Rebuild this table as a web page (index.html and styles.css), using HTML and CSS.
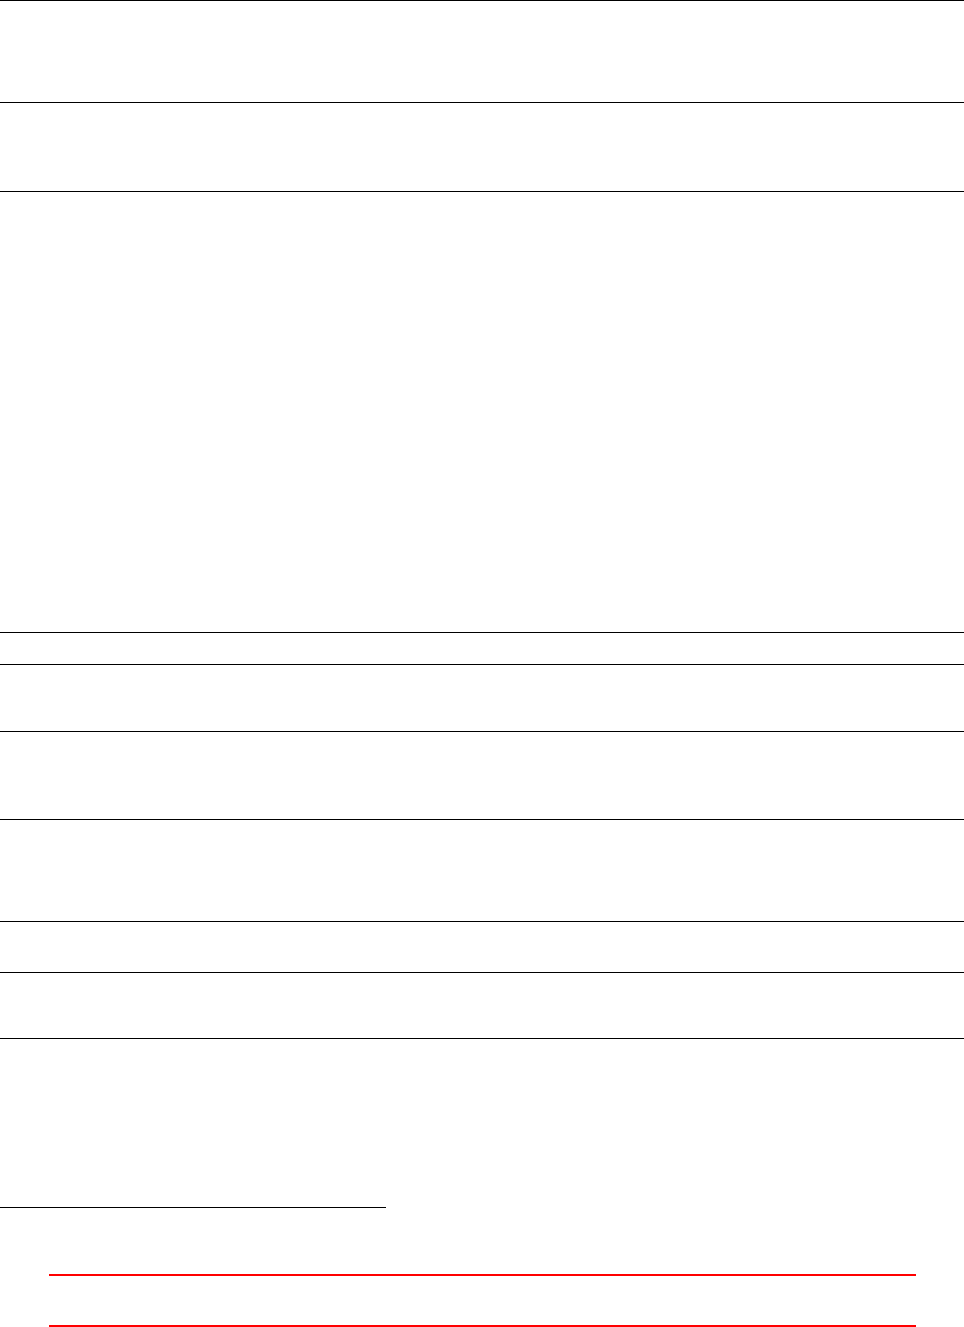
FILE: index.html
```html
<!DOCTYPE html>
<html lang="en">
<head>
<meta charset="utf-8">
<title>Page</title>
<link rel="stylesheet" href="styles.css">
</head>
<body>
  <main class="doc">
    <section class="row h102"></section>
    <section class="row h89"></section>
    <section class="row h441"></section>
    <section class="row h32"></section>
    <section class="row h67"></section>
    <section class="row h88"></section>
    <section class="row h102"></section>
    <section class="row h51"></section>
    <section class="row h66 last"></section>
  </main>
  <footer class="foot">
    <div class="footnote-rule"></div>
    <div class="alert"></div>
  </footer>
</body>
</html>
```
FILE: styles.css
```css
html, body {
  margin: 0;
  padding: 0;
  background: #fff;
  font-family: "Liberation Sans", Arial, sans-serif;
}
.doc {
  display: flex;
  flex-direction: column;
}
.row {
  box-sizing: border-box;
  border-top: 1px solid #000;
}
.row.last {
  border-bottom: 1px solid #000;
}
.h102 { height: 102px; }
.h89 { height: 89px; }
.h441 { height: 441px; }
.h32 { height: 32px; }
.h67 { height: 67px; }
.h88 { height: 88px; }
.h51 { height: 51px; }
.h66 { height: 67px; }
.foot {
  padding-top: 168px;
}
.footnote-rule {
  width: 386px;
  height: 0;
  border-top: 1px solid #000;
}
.alert {
  box-sizing: border-box;
  margin: 66px 0 0 49px;
  width: 867px;
  height: 53px;
  border-top: 2px solid #ff0000;
  border-bottom: 2px solid #ff0000;
}
```
